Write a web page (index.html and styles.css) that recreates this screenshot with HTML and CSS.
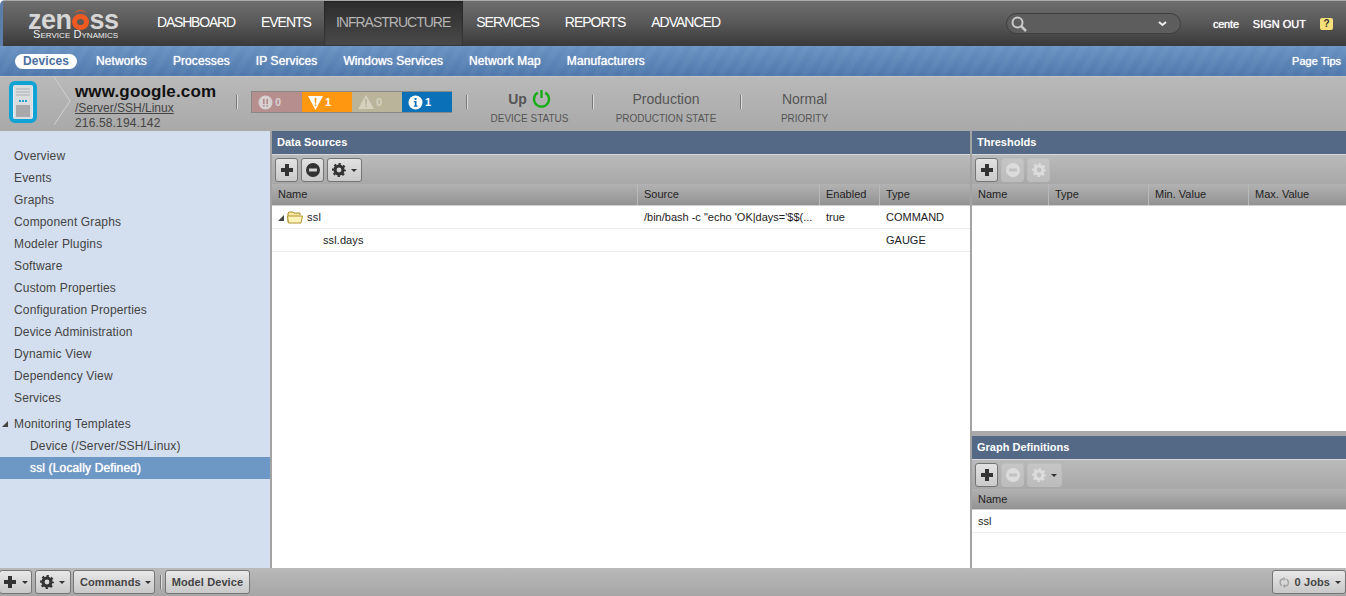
FILE: index.html
```html
<!DOCTYPE html>
<html lang="en">
<head>
    <meta charset="UTF-8">
    <title>Zenoss Service Dynamics</title>
    <link rel="stylesheet" href="styles.css">
</head>
<body>
    <svg class="defs" width="0" height="0">
        <symbol id="plus" viewBox="0 0 14 14"><path d="M5 1h4v4h4v4H9v4H5V9H1V5h4z"/></symbol>
        <symbol id="minus" viewBox="0 0 16 16"><path fill-rule="evenodd" d="M8 0a8 8 0 1 1 0 16A8 8 0 0 1 8 0zM3.500 6.300v3.400h9V6.300z"/></symbol>
        <symbol id="gear" viewBox="0 0 16 16">
            <circle cx="8" cy="8" r="4.600" fill="none" stroke="currentColor" stroke-width="3.600"/>
            <circle cx="8" cy="8" r="6.900" fill="none" stroke="currentColor" stroke-width="2.200" stroke-dasharray="2.700 2.720" stroke-dashoffset="1.350"/>
        </symbol>
    </svg>

    <div class="topbar">
        <div class="logo">
            <div class="logo-word">zen<span class="logo-o"></span>ss</div>
            <div class="logo-sub">Service Dynamics</div>
        </div>
        <ul class="mainnav">
            <li class="first"><a href="#">DASHBOARD</a></li>
            <li><a href="#">EVENTS</a></li>
            <li class="active"><a href="#">INFRASTRUCTURE</a></li>
            <li><a href="#">SERVICES</a></li>
            <li><a href="#">REPORTS</a></li>
            <li><a href="#">ADVANCED</a></li>
        </ul>
        <div class="search">
            <svg width="18" height="18" viewBox="0 0 18 18" fill="none" stroke="#c9c9c9"><circle cx="7.500" cy="7.500" r="5" stroke-width="2"/><path d="M11 11l5 5" stroke-width="2.500"/></svg>
            <svg class="search-arrow" width="9" height="6" viewBox="0 0 9 6" fill="none" stroke="#eee" stroke-width="2"><path d="M1 1l3.500 3L8 1"/></svg>
        </div>
        <a class="user" href="#">cente</a>
        <a class="signout" href="#">SIGN OUT</a>
        <span class="help">?</span>
    </div>

    <div class="subnav">
        <a class="current" href="#">Devices</a>
        <a href="#">Networks</a>
        <a href="#">Processes</a>
        <a href="#">IP Services</a>
        <a href="#">Windows Services</a>
        <a href="#">Network Map</a>
        <a href="#">Manufacturers</a>
        <a class="tips" href="#">Page Tips</a>
    </div>

    <div class="devicebar">
        <div class="device-icon">
            <svg width="28" height="42" viewBox="0 0 28 42">
                <rect x="2" y="2" width="24" height="38" rx="4" fill="#e4ecf0" stroke="#12a3d6" stroke-width="4"/>
                <rect x="5" y="4" width="18" height="34" fill="#d9dde0"/>
                <path d="M7 8h14M7 11h14M7 14h14" stroke="#a9adb0"/>
                <path d="M10 20h2M13 20h2M16 20h2" stroke="#2a9fd0" stroke-width="2"/>
                <rect x="7" y="24" width="14" height="12" fill="#a9a9ac"/>
            </svg>
        </div>
        <svg class="chevron" width="20" height="50" viewBox="0 0 20 50" fill="none" stroke="#cfcfcf"><path d="M1 0l16 24L1 48"/></svg>
        <div class="device-name">
            <div class="hostname">www.google.com</div>
            <a class="devclass" href="#">/Server/SSH/Linux</a>
            <div class="ip">216.58.194.142</div>
        </div>
        <span class="sep"></span>
        <div class="events">
            <div class="ev ev-crit">
                <svg width="15" height="15" viewBox="0 0 15 15"><circle cx="7.500" cy="7.500" r="7" fill="#d7d0d0"/><path d="M5 4h1.600v5H5zM8.400 4H10v5H8.400zM5 10h1.600v1.500H5zM8.400 10H10v1.500H8.400z" fill="#b58b8b"/></svg>
                <span>0</span>
            </div>
            <div class="ev ev-err">
                <svg width="15" height="15" viewBox="0 0 15 15"><path d="M0 1h15L7.500 15z" fill="#fff"/><path d="M6.500 3h2l-.4 5.500H6.900zM6.700 9.500h1.600V11H6.700z" fill="#ff9711"/></svg>
                <span>1</span>
            </div>
            <div class="ev ev-warn">
                <svg width="16" height="14" viewBox="0 0 16 14"><path d="M8 0l8 14H0z" fill="#d5d1bd"/><path d="M7 4h2l-.3 5.500H7.300zM7.200 10.500h1.600V12H7.200z" fill="#bab49b"/></svg>
                <span>0</span>
            </div>
            <div class="ev ev-info">
                <svg width="15" height="15" viewBox="0 0 15 15"><circle cx="7.500" cy="7.500" r="7" fill="#fff"/><path d="M6.500 3h2v2h-2zM5.800 6h2.700v4.500h1v1.200H5.800v-1.200h1V7.200h-1z" fill="#0a70b8"/></svg>
                <span>1</span>
            </div>
        </div>
        <span class="sep sep-status"></span>
        <div class="stat stat-device">
            <div class="stat-value up">Up
                <svg width="19" height="19" viewBox="0 0 19 19" fill="none" stroke="#16ad16" stroke-width="2.400"><path d="M5.800 3.600a7.500 7.500 0 1 0 7.400 0"/><path d="M9.500 1v8"/></svg>
            </div>
            <div class="stat-label">DEVICE STATUS</div>
        </div>
        <span class="sep"></span>
        <div class="stat stat-prod">
            <div class="stat-value">Production</div>
            <div class="stat-label">PRODUCTION STATE</div>
        </div>
        <span class="sep"></span>
        <div class="stat stat-prio">
            <div class="stat-value">Normal</div>
            <div class="stat-label">PRIORITY</div>
        </div>
    </div>

    <div class="content">
        <div class="sidebar">
            <ul class="sidemenu">
                <li>Overview</li>
                <li>Events</li>
                <li>Graphs</li>
                <li>Component Graphs</li>
                <li>Modeler Plugins</li>
                <li>Software</li>
                <li>Custom Properties</li>
                <li>Configuration Properties</li>
                <li>Device Administration</li>
                <li>Dynamic View</li>
                <li>Dependency View</li>
                <li>Services</li>
            </ul>
            <ul class="sidemenu sidetree">
                <li><span class="tree-arrow"></span>Monitoring Templates</li>
                <li class="child">Device (/Server/SSH/Linux)</li>
                <li class="child selected">ssl (Locally Defined)</li>
            </ul>
        </div>

        <div class="panel center">
            <div class="panel-title">Data Sources</div>
            <div class="toolbar">
                <button class="btn"><svg class="ic-plus"><use href="#plus"/></svg></button>
                <button class="btn"><svg class="ic"><use href="#minus"/></svg></button>
                <button class="btn wide"><svg class="ic"><use href="#gear"/></svg><i class="caret"></i></button>
            </div>
            <div class="grid-head ds-cols">
                <div>Name</div><div>Source</div><div>Enabled</div><div>Type</div>
            </div>
            <div class="grid-row ds-cols">
                <div class="tree-cell">
                    <span class="tree-arrow"></span>
                    <svg class="folder" width="16" height="14" viewBox="0 0 16 14"><path d="M1 12V3l1-1h4l1 1h6v2" fill="#f7e7a0" stroke="#a98a2c"/><path d="M.5 6h12.500l2.500 0-1.500 7H1.500z" fill="#fdf3b8" stroke="#b2922e"/></svg>
                    ssl
                </div>
                <div>/bin/bash -c "echo 'OK|days='$$(...</div><div>true</div><div>COMMAND</div>
            </div>
            <div class="grid-row ds-cols">
                <div class="leaf">ssl.days</div><div></div><div></div><div>GAUGE</div>
            </div>
        </div>

        <div class="rightcol">
            <div class="panel thresholds">
                <div class="panel-title">Thresholds</div>
                <div class="toolbar">
                    <button class="btn"><svg class="ic-plus"><use href="#plus"/></svg></button>
                    <button class="btn off"><svg class="ic"><use href="#minus"/></svg></button>
                    <button class="btn off"><svg class="ic"><use href="#gear"/></svg></button>
                </div>
                <div class="grid-head th-cols">
                    <div>Name</div><div>Type</div><div>Min. Value</div><div>Max. Value</div>
                </div>
            </div>
            <div class="panel graphs">
                <div class="panel-title">Graph Definitions</div>
                <div class="toolbar">
                    <button class="btn"><svg class="ic-plus"><use href="#plus"/></svg></button>
                    <button class="btn off"><svg class="ic"><use href="#minus"/></svg></button>
                    <button class="btn off wide"><svg class="ic"><use href="#gear"/></svg><i class="caret"></i></button>
                </div>
                <div class="grid-head">
                    <div>Name</div>
                </div>
                <div class="grid-row">
                    <div>ssl</div>
                </div>
            </div>
        </div>
    </div>

    <div class="footer">
        <button class="fbtn fbtn-add"><svg class="ic-plus"><use href="#plus"/></svg><i class="caret"></i></button>
        <button class="fbtn fbtn-gear"><svg class="ic"><use href="#gear"/></svg><i class="caret"></i></button>
        <button class="fbtn fbtn-cmd">Commands<i class="caret"></i></button>
        <span class="fsep"></span>
        <button class="fbtn">Model Device</button>
        <button class="fbtn jobs">
            <svg width="14" height="15" viewBox="0 0 14 15" fill="#a4a4a4"><path d="M6 3C3 3 1.500 5 1.500 7.500 1.500 9.500 2.500 11 4 12" fill="none" stroke="#a4a4a4" stroke-width="2"/><path d="M6 0v6l3-3z"/><path d="M8 12c3 0 4.500-2 4.500-4.500 0-2-1-3.500-2.500-4.500" fill="none" stroke="#a4a4a4" stroke-width="2"/><path d="M8 9v6l-3-3z"/></svg>
            0 Jobs<i class="caret"></i>
        </button>
    </div>
</body>
</html>
```

FILE: styles.css
```css
html, body {
    margin: 0;
    padding: 0;
    height: 100%;
    overflow: hidden;
}

body {
    font-family: "Liberation Sans", Arial, sans-serif;
    font-size: 12px;
    color: #333;
    display: flex;
    flex-direction: column;
    height: 596px;
    background-color: #fff;
}

a {
    text-decoration: none;
    color: inherit;
}

ul {
    list-style-type: none;
    margin: 0;
    padding: 0;
}

.defs {
    position: absolute;
}

/* top bar */

.topbar {
    height: 46px;
    flex: none;
    box-sizing: border-box;
    display: flex;
    align-items: center;
    color: #fff;
    background: linear-gradient(#6e6e6e, #5a5a5a 45%, #3a3a3a);
    border-top: 1px solid #a8a8a8;
    border-left: 3px solid #5d7ea8;
    border-top-left-radius: 5px;
}

.logo {
    width: 141px;
    flex: none;
    box-sizing: border-box;
    padding: 2px 0 0 25px;
    color: #d6d6d6;
}

.logo-word {
    height: 19px;
    font-size: 27px;
    font-weight: bold;
    line-height: 19px;
    letter-spacing: -0.5px;
    white-space: nowrap;
}

.logo-o {
    display: inline-block;
    position: relative;
    width: 7px;
    height: 6px;
    margin: 0 1px 0 0;
    border: 5px solid #ee5a22;
    border-radius: 50%;
    vertical-align: -1px;
}

.logo-o::before {
    content: "";
    position: absolute;
    left: -2px;
    top: -9px;
    width: 11px;
    height: 8px;
    border-top: 1px solid #ee5a22;
    border-radius: 50%;
}

.logo-sub {
    margin: 0 0 0 5px;
    font-size: 11px;
    font-variant: small-caps;
    line-height: 9px;
    letter-spacing: 0.05px;
    white-space: nowrap;
    color: #eee;
}

.mainnav {
    display: flex;
    align-self: stretch;
}

.mainnav li {
    padding: 0 13px;
    font-size: 14px;
    letter-spacing: -1px;
    line-height: 42px;
    white-space: nowrap;
}

.mainnav .first {
    letter-spacing: -1.2px;
}

.mainnav .active {
    padding-left: 12px;
    color: #b5b5b5;
    background: linear-gradient(#2c2c2c, #4a4a4a);
    box-shadow: inset 0 0 2px #111;
}

.search {
    width: 175px;
    height: 21px;
    margin-left: auto;
    box-sizing: border-box;
    display: flex;
    align-items: center;
    justify-content: space-between;
    padding: 0 13px 0 3px;
    border: 1px solid #3e3e3e;
    border-radius: 11px;
    background-color: #5d5d5d;
}

.user {
    margin-left: 32px;
    font-size: 11px;
    letter-spacing: -0.2px;
    text-shadow: 0 0 1px #fff;
}

.signout {
    margin-left: 14px;
    font-size: 11px;
    text-shadow: 0 0 1px #fff;
}

.help {
    width: 13px;
    height: 12px;
    margin: 0 13px 0 14px;
    border-radius: 2px;
    background-color: #f6e07a;
    color: #333;
    font-size: 10px;
    font-weight: bold;
    line-height: 12px;
    text-align: center;
}

/* sub nav */

.subnav {
    height: 30px;
    flex: none;
    box-sizing: border-box;
    display: flex;
    align-items: center;
    gap: 26px;
    padding: 0 5px 0 15px;
    color: #fff;
    font-size: 12px;
    letter-spacing: 0.1px;
    text-shadow: 0 0 1px #fff;
    background: repeating-linear-gradient(120deg, rgba(255,255,255,0.03) 0 6px, rgba(255,255,255,0) 6px 12px), linear-gradient(#6a93c2, #4f79ac);
}

.subnav .current {
    margin-right: -7px;
    padding: 0 8px;
    height: 15px;
    line-height: 15px;
    border-radius: 8px;
    background-color: #fff;
    color: #4a6f9e;
    font-weight: bold;
    text-shadow: none;
}

.subnav .tips {
    margin-left: auto;
    font-size: 11px;
    letter-spacing: 0;
}

/* device header */

.devicebar {
    height: 55px;
    flex: none;
    box-sizing: border-box;
    display: flex;
    align-items: center;
    padding-bottom: 4px;
    background: linear-gradient(#b9b9b9, #a9a9a9);
    border-top: 1px solid #c4c4c4;
}

.device-icon {
    width: 28px;
    margin-left: 9px;
    display: flex;
}

.chevron {
    margin-left: 16px;
    flex: none;
}

.device-name {
    width: 161px;
    margin-left: 2px;
    align-self: flex-start;
    color: #444;
    font-size: 12px;
    line-height: 14px;
}

.hostname {
    font-size: 17px;
    font-weight: bold;
    color: #111;
    line-height: 18px;
    margin-top: 6px;
    letter-spacing: 0.15px;
    white-space: nowrap;
}

.devclass {
    display: block;
    text-decoration: underline;
    line-height: 14px;
}

.ip {
    line-height: 17px;
    letter-spacing: 0.15px;
}

.sep {
    width: 1px;
    height: 14px;
    flex: none;
    background-color: #777;
    border-right: 1px solid #ddd;
}

.events {
    display: flex;
    width: 201px;
    height: 22px;
    margin-left: 13px;
    box-sizing: border-box;
    border: 1px solid #888;
    border-width: 1px 0 1px 1px;
}

.ev {
    width: 50px;
    display: flex;
    align-items: center;
    gap: 2px;
    padding-left: 6px;
    box-sizing: border-box;
    color: #fff;
    font-size: 11px;
    font-weight: bold;
}

.ev-crit { background-color: #b78e8e; color: #d7d0d0; }
.ev-err { background-color: #ff9711; }
.ev-warn { background-color: #bab49b; color: #d5d1bd; }
.ev-info { background-color: #0a70b8; }

.sep-status {
    margin-left: 14px;
}

.stat {
    padding-top: 13px;
    text-align: center;
    color: #555;
}

.stat-value {
    height: 20px;
    font-size: 14px;
    line-height: 20px;
    display: flex;
    align-items: center;
    justify-content: center;
    gap: 5px;
}

.up {
    font-weight: bold;
}

.stat-label {
    font-size: 10px;
    line-height: 20px;
    white-space: nowrap;
}

.stat-device {
    width: 123px;
    margin-right: 1px;
}

.stat-prod {
    width: 144px;
    margin-right: 2px;
}

.stat-prio {
    width: 125px;
}

/* main columns */

.content {
    flex: 1;
    min-height: 0;
    display: flex;
}

.sidebar {
    width: 270px;
    flex: none;
    background-color: #d3dfee;
    border-right: 2px solid #a3a3a3;
    padding-top: 14px;
    box-sizing: content-box;
}

.sidemenu {
    color: #444;
    letter-spacing: 0.15px;
}

.sidemenu li {
    height: 22px;
    line-height: 22px;
    padding-left: 14px;
    position: relative;
}

.sidetree {
    margin-top: 4px;
}

.sidemenu .child {
    padding-left: 30px;
}

.sidemenu .selected {
    background-color: #6d98c6;
    color: #fff;
    text-shadow: 0 0 1px #fff;
}

.tree-arrow {
    display: inline-block;
    width: 0;
    height: 0;
    border-style: solid;
    border-width: 0 0 6px 6px;
    border-color: transparent transparent #444 transparent;
}

.sidetree .tree-arrow {
    position: absolute;
    left: 2px;
    top: 8px;
}

.panel {
    background-color: #fff;
    min-width: 0;
}

.center {
    flex: 1;
}

.rightcol {
    width: 374px;
    flex: none;
    display: flex;
    flex-direction: column;
    border-left: 2px solid #a3a3a3;
}

.thresholds {
    height: 300px;
    flex: none;
}

.graphs {
    flex: 1;
    border-top: 5px solid #a9a9a9;
}

.panel-title {
    height: 24px;
    box-sizing: border-box;
    padding-left: 5px;
    line-height: 22px;
    font-size: 11px;
    font-weight: bold;
    color: #fff;
    background-color: #546985;
    border-bottom: 1px solid #d8d8d8;
}

.toolbar {
    height: 29px;
    box-sizing: border-box;
    display: flex;
    align-items: center;
    gap: 3px;
    padding: 1px 0 0 3px;
    background: linear-gradient(#bababa, #a8a8a8);
}

.btn {
    width: 23px;
    height: 24px;
    padding: 0;
    box-sizing: border-box;
    display: flex;
    align-items: center;
    justify-content: center;
    gap: 5px;
    border: 1px solid #757575;
    border-radius: 3px;
    background: linear-gradient(#e2e2e2, #cacaca);
    color: #333;
    fill: currentColor;
}

.btn.wide {
    width: 35px;
}

.btn.off {
    border-color: #bdbdbd;
    background: linear-gradient(#c6c6c6, #bcbcbc);
    color: #dcdcdc;
}

.btn.off .caret {
    border-top-color: #333;
}

.ic {
    width: 14px;
    height: 14px;
    flex: none;
}

.ic-plus {
    width: 14px;
    height: 14px;
    flex: none;
}

.caret {
    width: 0;
    height: 0;
    flex: none;
    border-style: solid;
    border-width: 3px 3px 0 3px;
    border-color: #333 transparent transparent transparent;
}

.grid-head {
    height: 22px;
    box-sizing: border-box;
    display: grid;
    background: linear-gradient(#b2b2b2, #939393);
    border-bottom: 1px solid #d0d0d0;
    font-size: 11px;
    color: #222;
}

.graphs .grid-head {
    height: 21px;
}

.grid-head > div {
    padding-left: 6px;
    line-height: 20px;
    border-left: 1px solid #b9b9b9;
}

.grid-head > div:first-child {
    border-left: 0;
}

.grid-row {
    height: 23px;
    box-sizing: border-box;
    display: grid;
    border-bottom: 1px solid #ececec;
    font-size: 11px;
    color: #222;
    line-height: 22px;
}

.grid-row > div {
    padding-left: 6px;
    white-space: nowrap;
    overflow: hidden;
}

.grid-row > div + div {
    padding-left: 7px;
}

.ds-cols {
    grid-template-columns: 365px 182px 60px 1fr;
}

.th-cols {
    grid-template-columns: 76px 100px 100px 1fr;
}

.tree-cell {
    display: flex;
    align-items: center;
    gap: 3px;
    letter-spacing: 0.2px;
}

.tree-cell .tree-arrow {
    margin-top: 2px;
}

.folder {
    flex: none;
    margin-right: 1px;
}

.grid-row > .leaf {
    padding-left: 51px;
    letter-spacing: 0.1px;
}

/* footer */

.footer {
    height: 28px;
    flex: none;
    box-sizing: border-box;
    display: flex;
    align-items: center;
    gap: 2px;
    background: linear-gradient(#b9b9b9, #a6a6a6);
}

.fbtn {
    height: 24px;
    padding: 0 6px;
    box-sizing: border-box;
    display: flex;
    align-items: center;
    gap: 3px;
    border: 1px solid #757575;
    border-radius: 3px;
    background: linear-gradient(#e8e8e8, #c8c8c8);
    font-family: inherit;
    font-size: 11px;
    font-weight: bold;
    color: #444;
    fill: #333;
    white-space: nowrap;
    letter-spacing: 0.1px;
}

.fbtn-add {
    width: 33px;
    margin-left: -1px;
    padding: 0 3px;
    justify-content: space-between;
}

.fbtn-gear {
    width: 36px;
    margin-left: 1px;
    padding: 0 5px 0 4px;
    justify-content: space-between;
    color: #333;
}

.fbtn-cmd {
    gap: 4px;
    padding-right: 3px;
}

.fsep {
    width: 1px;
    height: 14px;
    background-color: #777;
    border-right: 1px solid #ddd;
    margin: 0 1px 0 3px;
}

.jobs {
    margin-left: auto;
    width: 74px;
    padding: 0 4px 0 6px;
    gap: 5px;
}
```
